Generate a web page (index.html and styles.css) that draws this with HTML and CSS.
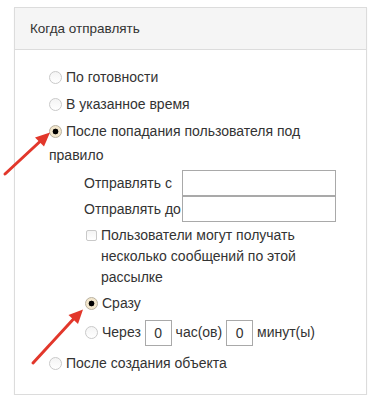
FILE: index.html
```html
<!DOCTYPE html>
<html lang="ru">

<head>
    <meta charset="UTF-8">
    <meta name="viewport" content="width=device-width, initial-scale=1.0">
    <title>Когда отправлять</title>
    <link rel="stylesheet" href="styles.css">
</head>

<body>

    <div class="panel">
        <div class="panel-heading">Когда отправлять</div>
        <div class="panel-body">
            <label class="radio-row"><input type="radio" name="when">По готовности</label>
            <label class="radio-row"><input type="radio" name="when">В указанное время</label>
            <label class="radio-row"><input type="radio" name="when" checked>После попадания пользователя под правило</label>

            <div class="sub">
                <table class="period">
                    <tr>
                        <td>Отправлять с</td>
                        <td><input type="text" class="text-input"></td>
                    </tr>
                    <tr>
                        <td>Отправлять до</td>
                        <td><input type="text" class="text-input"></td>
                    </tr>
                </table>

                <label class="check-row"><input type="checkbox">Пользователи могут получать несколько сообщений по этой рассылке</label>

                <label class="radio-row sub-radio"><input type="radio" name="delay" checked>Сразу</label>
                <div class="delay-row">
                    <input type="radio" name="delay">Через <input type="text" class="num-input" value="0"> час(ов) <input type="text" class="num-input" value="0"> минут(ы)
                </div>
            </div>

            <label class="radio-row last"><input type="radio" name="when">После создания объекта</label>
        </div>
    </div>

    <!-- стрелки поверх формы -->
    <svg class="arrows" width="379" height="400" viewBox="0 0 379 400">
        <line x1="5" y1="174" x2="40" y2="141.5" stroke="#e2372b" stroke-width="3" stroke-linecap="round" />
        <polygon points="50,132.5 44,146.5 35,137.5" fill="#e2372b" />
        <line x1="33" y1="363" x2="73.5" y2="319" stroke="#e2372b" stroke-width="3" stroke-linecap="round" />
        <polygon points="83,309.5 78,324 68.5,315" fill="#e2372b" />
    </svg>

</body>

</html>
```

FILE: styles.css
```css
body {
    font-family: "Liberation Sans", Arial, sans-serif;
    font-size: 14px;
    color: #333;
    margin: 0;
    padding: 0;
    background-color: #fff;
}

.panel {
    box-sizing: border-box;
    width: 353px;
    height: 388px;
    margin: 7px 0 0 14px;
    border: 1px solid #dcdcdc;
    box-shadow: 0 1px 1px rgba(0, 0, 0, 0.08);
    background-color: #fff;
}

.panel-heading {
    height: 41px;
    line-height: 41px;
    padding: 0 15px;
    font-size: 13.5px;
    background-color: #f5f5f5;
    border-bottom: 1px solid #dcdcdc;
}

.panel-body {
    padding: 15px 10px 0 34px;
}

.radio-row {
    display: block;
    line-height: 24px;
    margin-bottom: 3px;
}

input[type="radio"] {
    -webkit-appearance: none;
    appearance: none;
    box-sizing: border-box;
    width: 13px;
    height: 13px;
    margin: 0 4px 0 0;
    border: 1px solid #c9c9c9;
    border-radius: 50%;
    background: linear-gradient(#f4f4f4, #fff);
    vertical-align: -2px;
}

input[type="radio"]:checked {
    border-color: #b9b1a0;
    background: radial-gradient(circle, #000 0, #000 2.6px, #f2e6cc 3.2px);
}

.sub {
    padding-left: 35px;
}

.period {
    border-collapse: collapse;
    margin-top: 0;
}

.period td {
    padding: 0;
    height: 26px;
}

.period td:first-child {
    padding-right: 1px;
}

.text-input {
    box-sizing: border-box;
    width: 154px;
    height: 26px;
    margin: 0;
    border: 1px solid #a9a9a9;
    display: block;
}

.check-row {
    display: block;
    position: relative;
    padding-left: 17px;
    margin-top: 3px;
    line-height: 21px;
}

.check-row input {
    position: absolute;
    left: 2px;
    top: 5px;
    width: 11px;
    height: 11px;
    margin: 0;
    -webkit-appearance: none;
    appearance: none;
    border: 1px solid #c9c9c9;
    border-radius: 2px;
    background: linear-gradient(#f4f4f4, #fff);
}

.sub-radio {
    margin: 3px 0 3px 1px;
}

.delay-row {
    height: 28px;
    line-height: 28px;
    margin-left: 1px;
    white-space: nowrap;
}

.num-input {
    box-sizing: border-box;
    width: 27px;
    height: 26px;
    margin: 0;
    border: 1px solid #a9a9a9;
    font-family: "Liberation Sans", Arial, sans-serif;
    font-size: 14px;
    color: #333;
    text-align: center;
    vertical-align: middle;
}

.last {
    margin-top: 5px;
}

.arrows {
    position: absolute;
    left: 0;
    top: 0;
    pointer-events: none;
}
```
